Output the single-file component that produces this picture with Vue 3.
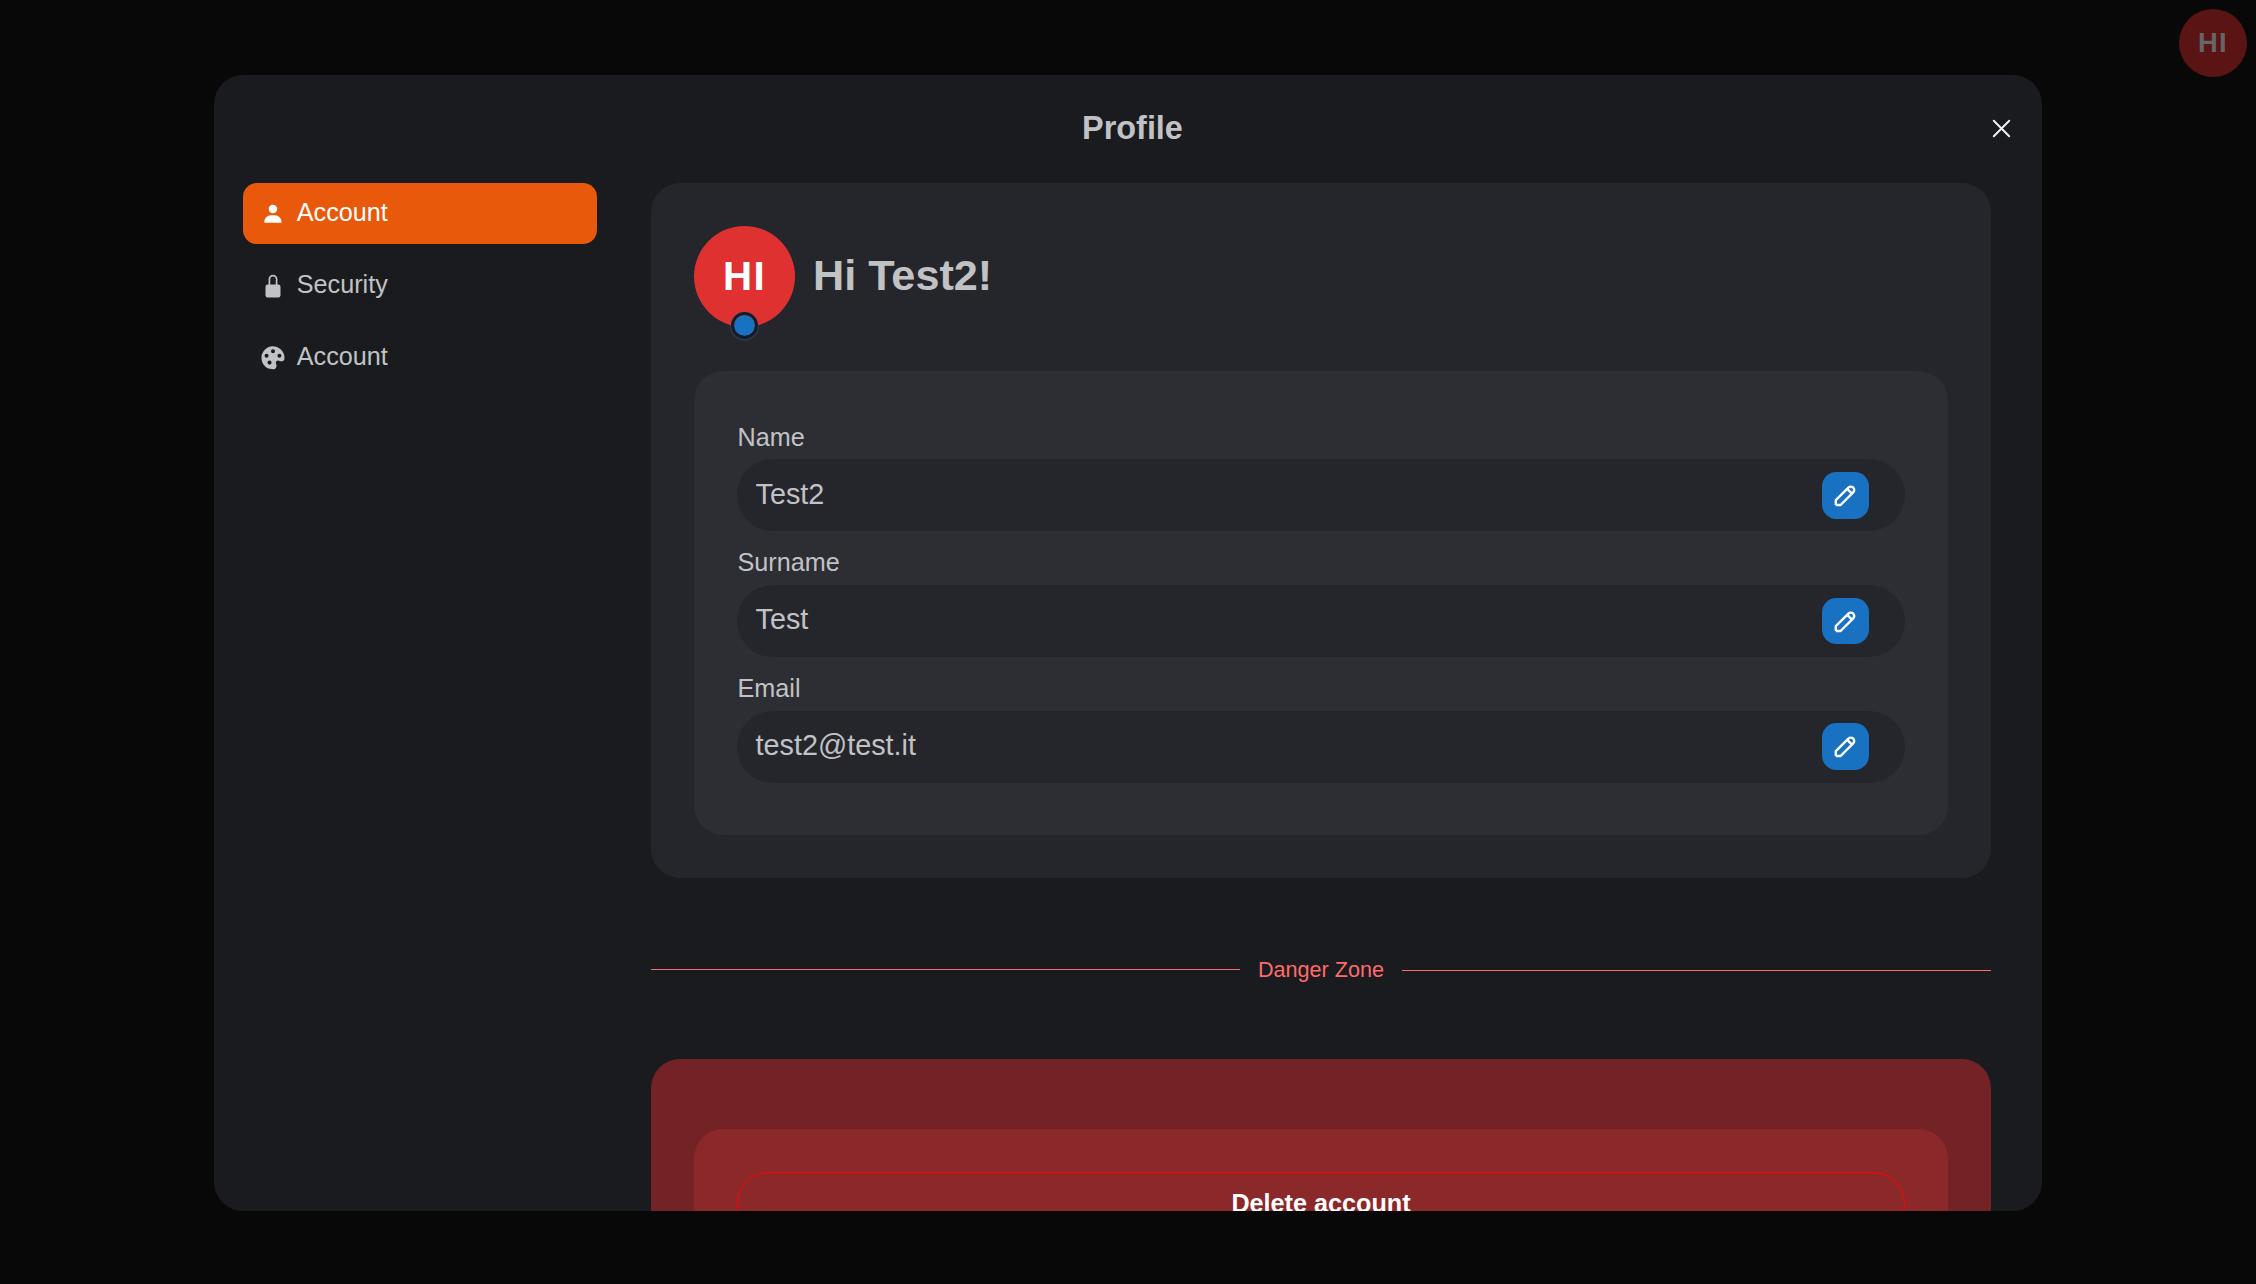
<script setup>
const nav = [
  { label: 'Account', icon: 'user', active: true },
  { label: 'Security', icon: 'lock', active: false },
  { label: 'Account', icon: 'palette', active: false },
]
const fields = [
  { label: 'Name', value: 'Test2' },
  { label: 'Surname', value: 'Test' },
  { label: 'Email', value: 'test2@test.it' },
]
</script>

<template>
  <div class="page">
    <div class="top-avatar">HI</div>
    <section class="modal">
      <header class="head">
        <h2>Profile</h2>
        <svg class="close" viewBox="0 0 15 15" width="29" height="29">
          <path d="M3.5 3.5l8 8M11.5 3.5l-8 8" stroke="#f1f3f5" stroke-width="1" stroke-linecap="round" fill="none" />
        </svg>
      </header>
      <div class="body">
        <nav class="nav">
          <a v-for="(item, i) in nav" :key="i" class="link" :class="{ active: item.active }">
            <svg v-if="item.icon === 'user'" width="26" height="26" viewBox="0 0 24 24" fill="currentColor">
              <path d="M7.500 6.500C7.500 8.981 9.519 11 12 11s4.500-2.019 4.500-4.500S14.481 2 12 2 7.500 4.019 7.500 6.500zM20 21h1v-1c0-3.859-3.141-7-7-7h-4c-3.860 0-7 3.141-7 7v1h17z" transform="translate(1.400 1.700) scale(.88)" />
            </svg>
            <svg v-else-if="item.icon === 'lock'" width="26" height="26" viewBox="0 0.500 26 26">
              <path d="M9.400 13V6.700a3.600 3.600 0 0 1 7.200 0V13" fill="none" stroke="currentColor" stroke-width="1.700" />
              <rect x="5.500" y="12" width="15" height="13" rx="2.300" fill="currentColor" />
            </svg>
            <svg v-else width="26" height="26" viewBox="0.700 0.900 22.600 22.600" fill="currentColor">
              <path fill-rule="evenodd" d="M13.400 2.096a10.080 10.080 0 0 0-8.937 3.331A10.054 10.054 0 0 0 2.096 13.400c.530 3.894 3.458 7.207 7.285 8.246a9.982 9.982 0 0 0 2.618.354l.142-.001a3.001 3.001 0 0 0 2.516-1.426 2.989 2.989 0 0 0 .153-2.879l-.199-.416a1.919 1.919 0 0 1 .094-1.912 2.004 2.004 0 0 1 2.576-.755l.412.197c.412.198.850.299 1.301.299A3.022 3.022 0 0 0 22 12.140a9.935 9.935 0 0 0-.353-2.760c-1.040-3.826-4.353-6.754-8.247-7.284zM6.400 11.950a1.750 1.750 0 1 1 0-3.500 1.750 1.750 0 0 1 0 3.500zM9 18a1.800 1.800 0 1 1 0-3.600A1.800 1.800 0 0 1 9 18zM12 8.150a1.750 1.750 0 1 1 0-3.500 1.750 1.750 0 0 1 0 3.500zM17.600 11.950a1.750 1.750 0 1 1 0-3.500 1.750 1.750 0 0 1 0 3.500z" />
            </svg>
            <span>{{ item.label }}</span>
          </a>
        </nav>
        <main class="content">
          <section class="card">
            <div class="greeting">
              <div class="avatar">HI<i class="dot"></i></div>
              <h1>Hi Test2!</h1>
            </div>
            <div class="panel">
              <div v-for="f in fields" :key="f.label" class="field">
                <label>{{ f.label }}</label>
                <div class="input">
                  <span>{{ f.value }}</span>
                  <button class="edit" :aria-label="'Edit ' + f.label">
                    <svg width="28.800" height="28.800" viewBox="0 0 24 24" fill="none" stroke="#fff" stroke-width="2" stroke-linejoin="round">
                      <path d="M4 20h4l10.500-10.500a2.828 2.828 0 1 0-4-4L4 16v4" />
                      <path d="M13.500 6.500l4 4" />
                    </svg>
                  </button>
                </div>
              </div>
            </div>
          </section>
          <div class="divider"><i class="line"></i><span>Danger Zone</span><i class="line low"></i></div>
          <section class="danger">
            <div class="danger-panel">
              <button class="delete">Delete account</button>
            </div>
          </section>
        </main>
      </div>
    </section>
  </div>
</template>

<style>
body { background: #080808; }
</style>

<style scoped>
* { box-sizing: border-box; }
h1, h2 { margin: 0; }
button { padding: 0; margin: 0; font: inherit; border: 0; }
.page {
  position: relative;
  width: 2256px;
  height: 1284px;
  overflow: hidden;
  padding: 75px 214px 0;
  background: #080808;
  color: #c1c2c5;
  font-family: "Liberation Sans", Arial, sans-serif;
}
.top-avatar {
  position: absolute;
  top: 9px;
  right: 9px;
  width: 68px;
  height: 68px;
  border-radius: 50%;
  display: flex;
  align-items: center;
  justify-content: center;
  background: #5a1414;
  color: #666;
  font-size: 27.4px;
  font-weight: 700;
  letter-spacing: 1.4px;
}
.modal {
  width: 1828px;
  height: 1136px;
  border-radius: 29px;
  background: #1a1b1e;
  overflow: hidden;
}
.head {
  height: 108px;
  display: flex;
  align-items: center;
  justify-content: center;
  position: relative;
}
.head h2 { font-size: 32.4px; line-height: 40px; padding: 0 0 3px 9px; }
.close { position: absolute; right: 26px; top: 39px; }
.body { display: flex; padding: 0 51px 0 29px; }
.nav { width: 354px; margin-right: 54px; display: flex; flex-direction: column; gap: 11px; }
.link {
  height: 61px;
  padding: 0 16.6px;
  display: flex;
  align-items: center;
  gap: 11.2px;
  border-radius: 14px;
  font-size: 25.2px;
}
.link span { padding-bottom: 2px; }
.link.active { background: #e8590c; color: #fff; }
.content { width: 1340px; }
.card {
  height: 695px;
  padding: 43px;
  border-radius: 29px;
  background: #25262b;
}
.greeting { height: 145px; display: flex; align-items: flex-start; gap: 18px; }
.greeting h1 { font-size: 43.2px; line-height: 99px; }
.avatar {
  position: relative;
  width: 101px;
  height: 101px;
  border-radius: 50%;
  background: #e03131;
  color: #fff;
  font-size: 40.3px;
  font-weight: 700;
  letter-spacing: 1.4px;
  display: flex;
  align-items: center;
  justify-content: center;
}
.dot {
  position: absolute;
  left: 37px;
  top: 86.3px;
  width: 27px;
  height: 27px;
  border-radius: 50%;
  border: 3px solid #1a1b1e;
  background: #1971c2;
  background-clip: padding-box;
  box-shadow: 0 0.5px 0 1px rgba(25, 113, 194, 0.35);
}
.panel {
  height: 464px;
  padding: 43px;
  border-radius: 29px;
  background: #2c2e33;
}
.field { height: 125.8px; padding-top: 8.5px; }
.field label { display: block; height: 36.7px; padding-left: 0.5px; line-height: 28px; font-size: 25.2px; }
.input {
  height: 72px;
  padding: 0 36px 0 18.5px;
  border-radius: 36px;
  background: #25262b;
  display: flex;
  align-items: center;
  justify-content: space-between;
  font-size: 28.8px;
}
.input span { padding-bottom: 2px; }
.edit {
  width: 46.8px;
  height: 46.8px;
  border-radius: 14.4px;
  background: #1971c2;
  display: flex;
  align-items: center;
  justify-content: center;
}
.divider {
  height: 181px;
  display: flex;
  align-items: center;
  gap: 18px;
  color: #ff6b6b;
  font-size: 21.6px;
}
.divider span { padding-top: 3px; }
.line { flex: 1; height: 1px; margin-top: 2px; background: #ff6b6b; }
.line.low { margin-top: 4px; }
.danger { height: 300px; padding: 70px 43px 43px; border-radius: 29px; background: #732226; }
.danger-panel { height: 190px; padding: 43px; border-radius: 29px; background: #8b2829; }
.delete {
  width: 100%;
  height: 63px;
  border: 1px solid #f00;
  border-radius: 32px;
  background: transparent;
  color: #fff;
  font-size: 25.2px;
  font-weight: 700;
}
</style>
